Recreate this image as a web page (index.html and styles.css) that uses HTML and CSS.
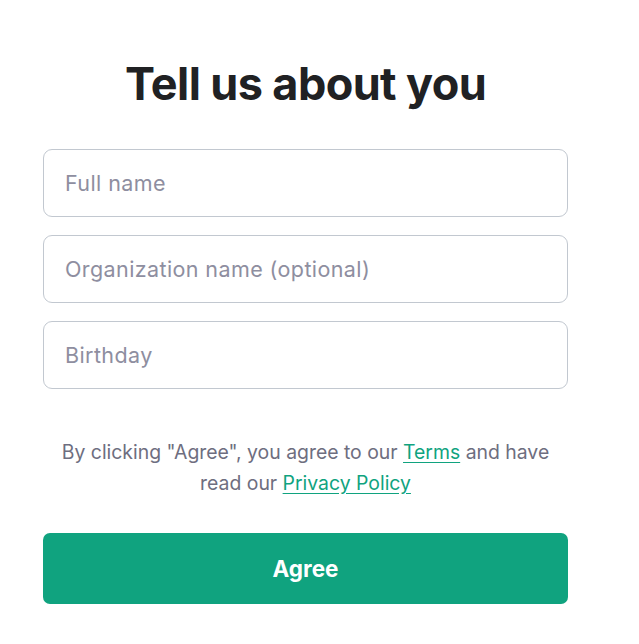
FILE: index.html
```html
<!DOCTYPE html>
<html lang="en">
<head>
<meta charset="utf-8">
<title>Tell us about you</title>
<link rel="stylesheet" href="styles.css">
</head>
<body>
<main class="page">
  <h1 class="title">Tell us about you</h1>
  <form class="form">
    <div class="fields">
      <input class="field" type="text" placeholder="Full name">
      <input class="field" type="text" placeholder="Organization name (optional)">
      <input class="field" type="text" placeholder="Birthday">
    </div>
    <p class="legal">By clicking "Agree", you agree to our <a href="#">Terms</a> and have read our <a href="#">Privacy Policy</a></p>
    <button class="agree" type="button">Agree</button>
  </form>
</main>
</body>
</html>
```
FILE: styles.css
```css
* { box-sizing: border-box; }
html, body { margin: 0; padding: 0; background: #fff; }
body { font-family: Inter, "Liberation Sans", sans-serif; color: #202123; }
.page {
  width: 525px;
  margin-left: 43px;
  padding-top: 56px;
}
.title {
  margin: 0;
  text-align: center;
  font-size: 45px;
  font-weight: 700;
  letter-spacing: -0.6px;
  line-height: 56px;
  color: #202123;
}
.form { display: flex; flex-direction: column; margin-top: 37px; }
.fields { display: flex; flex-direction: column; gap: 18px; }
.field {
  height: 68px;
  width: 100%;
  border: 1px solid #c2c8d0;
  border-radius: 9px;
  padding: 0 21px;
  font-family: inherit;
  font-size: 21.5px;
  letter-spacing: 0.4px;
  color: #2d333a;
  outline: none;
}
.field::placeholder { color: #8e8ea0; }
.legal {
  margin: 48px 0 0;
  text-align: center;
  font-size: 19.4px;
  line-height: 31px;
  color: #6e6e80;
}
.legal a { color: #10a37f; text-decoration: underline; text-underline-offset: 3px; }
.agree {
  margin-top: 34px;
  height: 71px;
  border: none;
  border-radius: 7px;
  background: #10a37f;
  color: #fff;
  font-family: inherit;
  font-size: 22.5px;
  font-weight: 700;
}
```
